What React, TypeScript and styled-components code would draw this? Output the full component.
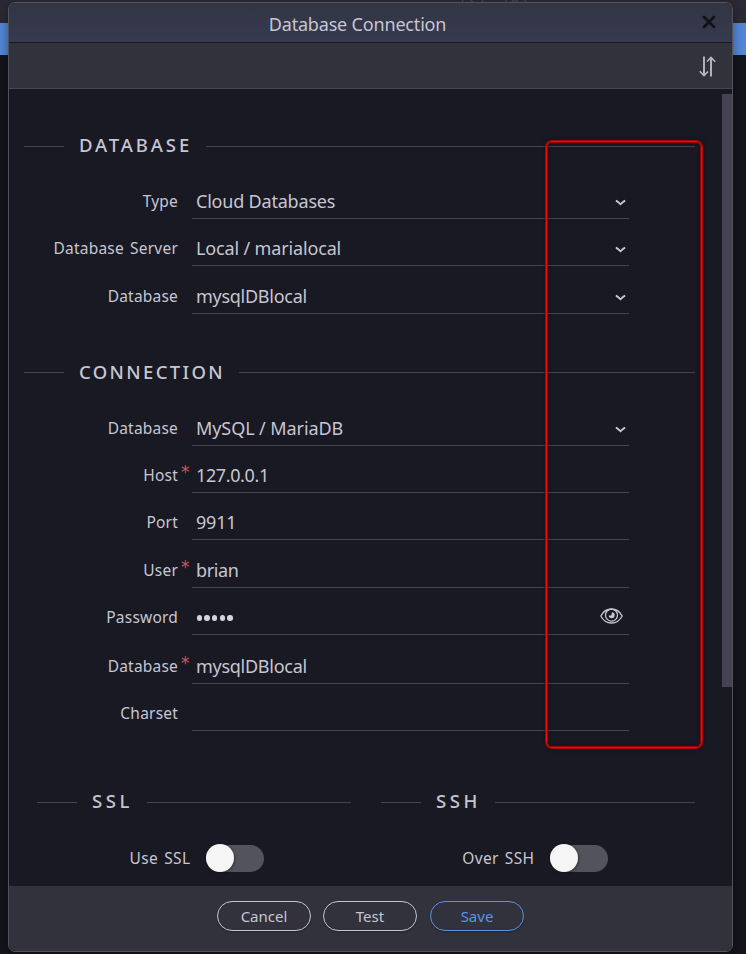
import React from "react";
import styled, { createGlobalStyle } from "styled-components";

const GlobalStyle = createGlobalStyle`
  * { box-sizing: border-box; }
  html, body { margin: 0; padding: 0; background: #14141c; }
  body { font-family: "Noto Sans", "Open Sans", sans-serif; color: #c6c6d2; overflow: hidden; }
`;

const Page = styled.div`
  height: 954px;
  padding: 2px 13px 0 8px;
  background: linear-gradient(
    #2b2a34 0 23px,
    #5386d6 23px 55px,
    #14141c 55px
  );
`;

const Dialog = styled.div`
  height: 950px;
  display: flex;
  flex-direction: column;
  border: 1px solid #53535e;
  border-radius: 7px;
  overflow: hidden;
  background: #191923;
  box-shadow: 0 2px 10px rgba(0, 0, 0, 0.4);
`;

const TitleBar = styled.header`
  height: 40px;
  flex: none;
  display: grid;
  grid-template-columns: 48px 1fr 48px;
  align-items: center;
  border-bottom: 1px solid #191923;
  background: linear-gradient(#333541, #343a50);
`;

const Title = styled.h1`
  grid-column: 2;
  margin: 3px 0 0 -26px;
  text-align: center;
  font-weight: 400;
  font-size: 18px;
  line-height: 24px;
  letter-spacing: -0.18px;
`;

const IconButton = styled.button`
  display: flex;
  padding: 0;
  border: 0;
  background: none;
  color: inherit;
`;

const CloseButton = styled(IconButton)`
  justify-self: end;
  margin: -1px 16px 0 0;
  color: #111115;
`;

const Toolbar = styled.div`
  height: 46px;
  flex: none;
  display: flex;
  align-items: center;
  justify-content: flex-end;
  padding: 2px 16px 0 0;
  border-bottom: 1px solid #474751;
  background: #32323d;
`;

const Body = styled.main`
  flex: 1;
  min-height: 0;
  display: flex;
  justify-content: space-between;
`;

const Content = styled.div`
  width: 686px;
  padding: 42px 0 0 15px;
`;

const ScrollThumb = styled.div`
  width: 10px;
  height: 593px;
  margin-top: 5px;
  background: #44434f;
`;

const Heading = styled.div<{ $top?: number }>`
  height: 31px;
  margin-top: ${(p) => p.$top ?? 0}px;
  display: flex;
  align-items: center;
  &::before, &::after { content: ""; height: 1px; background: #44444f; }
  &::before { width: 40px; }
  &::after { flex: 1; }
`;

const HeadingText = styled.h2<{ $spacing: number; $lift?: number }>`
  margin: -${(p) => p.$lift ?? 3}px 14px 0 15px;
  font-size: 18.5px;
  font-weight: 500;
  line-height: 24px;
  letter-spacing: ${(p) => p.$spacing}px;
`;

const Fields = styled.div<{ $top: number }>`
  width: 605px;
  margin-top: ${(p) => p.$top}px;
`;

const Row = styled.div<{ $height: number }>`
  height: ${(p) => p.$height}px;
  display: grid;
  grid-template-columns: 154px 14px 437px;
  align-items: end;
`;

const Label = styled.label`
  text-align: right;
  font-size: 15.5px;
  line-height: 20px;
  white-space: nowrap;
  letter-spacing: 0.2px;
  word-spacing: 2px;
  margin-bottom: 8px;
`;

const Required = styled.span`
  align-self: end;
  margin: 0 0 11px 3px;
  color: #d65656;
  font-family: "DejaVu Sans", sans-serif;
  font-size: 17px;
  line-height: 20px;
`;

const Field = styled.div`
  height: 36px;
  display: flex;
  align-items: center;
  justify-content: space-between;
  padding: 3px 3px 0 4px;
  border-bottom: 1px solid #44444f;
`;

const Value = styled.span<{ $spacing?: number }>`
  margin-top: -2px;
  font-size: 18px;
  line-height: 24px;
  white-space: nowrap;
  letter-spacing: ${(p) => p.$spacing ?? -0.2}px;
`;

const Dots = styled.span`
  display: flex;
  gap: 2.2px;
  margin: 0 0 0 0.6px;
  i { width: 5.5px; height: 5.5px; border-radius: 50%; background: #d4d4df; }
`;

const Halves = styled.div`
  display: grid;
  grid-template-columns: 314px 314px;
  column-gap: 30px;
  margin: 56px 0 0 13px;
`;

const SwitchRow = styled.div`
  display: grid;
  grid-template-columns: 153.5px 58px;
  column-gap: 15.5px;
  align-items: center;
  margin-top: 26px;
  height: 28px;
`;

const SwitchLabel = styled.label`
  text-align: right;
  font-size: 15.5px;
  line-height: 20px;
  letter-spacing: 0.4px;
  word-spacing: 1.5px;
`;

const Track = styled.div`
  width: 58px;
  height: 27px;
  display: flex;
  align-items: center;
  border-radius: 14px;
  background: #53535e;
`;

const Knob = styled.div`
  flex: none;
  width: 28px;
  height: 28px;
  margin-top: -1px;
  border-radius: 50%;
  background: #f5f5f5;
  box-shadow: 1px 1px 3px rgba(0, 0, 0, 0.35);
`;

const Footer = styled.footer`
  height: 65px;
  flex: none;
  display: flex;
  gap: 12px;
  padding: 15px 0 0 208px;
  background: #32323d;
`;

const Button = styled.button<{ $primary?: boolean }>`
  width: 94px;
  height: 30px;
  padding: 0;
  border: 1px solid ${(p) => (p.$primary ? "#5b92ea" : "#c6c6d2")};
  border-radius: 15px;
  margin-left: ${(p) => (p.$primary ? 1 : 0)}px;
  background: transparent;
  color: ${(p) => (p.$primary ? "#5b92ea" : "#c6c6d2")};
  font: 400 15px/20px "Noto Sans", "Open Sans", sans-serif;
  box-shadow: 0 1px 2px rgba(0, 0, 0, 0.3);
`;

/* Annotation frame lying over the right end of the form */
const Highlight = styled.div`
  position: absolute;
  left: 546px;
  top: 141px;
  width: 156px;
  height: 607px;
  border: 1px solid #ff0000;
  border-radius: 6px;
  box-shadow: 0 0 0 1px rgba(225, 0, 0, 0.75), inset 0 0 0 1px rgba(225, 0, 0, 0.65),
    0 0 5px rgba(0, 0, 0, 0.6), inset 0 0 5px rgba(0, 0, 0, 0.5);
`;

const BackdropMarks = styled.svg`
  position: absolute;
  left: 460px;
  top: 0;
`;

const Chevron = () => (
  <svg width="11" height="7" viewBox="0 0 11 7" fill="none">
    <path d="M0.8 1.7C2.5 2.3 4 3.9 5.5 5.3C7 3.9 8.5 2.3 10.2 1.7" stroke="#c9c9d5" strokeWidth="1.8" />
  </svg>
);

const CloseIcon = () => (
  <svg width="14" height="14" viewBox="0 0 14 14" fill="none">
    <path d="M2 2L12 12M12 2L2 12" stroke="currentColor" strokeWidth="2.8" strokeLinecap="round" />
  </svg>
);

const SortIcon = () => (
  <svg width="17" height="21" viewBox="0 0 17 21" fill="none" stroke="#b8b8c3">
    <path d="M5 0.5V19M12 20.5V2" strokeWidth="1.9" />
    <path d="M0.8 15.3L5 19.5L9 15.5M8 5.5L12 1.5L16.2 5.7" strokeWidth="1.6" />
  </svg>
);

const EyeIcon = () => (
  <svg width="23" height="16" viewBox="0 0 23 16" fill="none" stroke="#c6c6d2">
    <path d="M0.8 8C3.2 3.4 7 1 11.5 1S19.8 3.4 22.2 8C19.8 12.6 16 15 11.5 15S3.2 12.6 0.8 8Z" strokeWidth="1.3" />
    <circle cx="11.5" cy="7.2" r="6" strokeWidth="1.2" />
    <path d="M12 4.2A3 3 0 1 1 8.7 7.4H11.3Z" fill="#c6c6d2" stroke="none" />
  </svg>
);

type FieldRowProps = {
  label: string;
  height?: number;
  value?: string;
  spacing?: number;
  required?: boolean;
  kind?: "select" | "text" | "password";
};

const FieldRow = ({ label, height = 47, value, spacing, required, kind = "text" }: FieldRowProps) => (
  <Row $height={height}>
    <Label>{label}</Label>
    <Required>{required ? "*" : ""}</Required>
    <Field>
      {kind === "password" ? (
        <Dots><i /><i /><i /><i /><i /></Dots>
      ) : (
        <Value $spacing={spacing}>{value}</Value>
      )}
      {kind === "select" && <Chevron />}
      {kind === "password" && <PasswordEye><EyeIcon /></PasswordEye>}
    </Field>
  </Row>
);

const PasswordEye = styled(IconButton)`
  margin: -4px 3px 0 0;
`;

export default function App() {
  return (
    <>
      <GlobalStyle />
      <Page>
        <BackdropMarks width="70" height="3" stroke="#4a4a53" fill="none">
          <path d="M3 0L2 3M10 0L13 2M23 0L22 2M46 0V3M52 3V1H58M64 0L67 2" />
        </BackdropMarks>
        <Dialog>
          <TitleBar>
            <Title>Database Connection</Title>
            <CloseButton aria-label="Close"><CloseIcon /></CloseButton>
          </TitleBar>
          <Toolbar>
            <IconButton aria-label="Sort"><SortIcon /></IconButton>
          </Toolbar>
          <Body>
            <Content>
              <Heading><HeadingText $spacing={2.9}>DATABASE</HeadingText></Heading>
              <Fields $top={10}>
                <FieldRow label="Type" value="Cloud Databases" kind="select" />
                <FieldRow label="Database Server" value="Local / marialocal" kind="select" spacing={-0.15} />
                <FieldRow label="Database" value="mysqlDBlocal" kind="select" height={48} spacing={-0.27} />
              </Fields>
              <Heading $top={43}><HeadingText $spacing={2.35} $lift={1}>CONNECTION</HeadingText></Heading>
              <Fields $top={11}>
                <FieldRow label="Database" value="MySQL / MariaDB" kind="select" spacing={-0.08} />
                <FieldRow label="Host" value="127.0.0.1" required spacing={-0.38} />
                <FieldRow label="Port" value="9911" />
                <FieldRow label="User" value="brian" required height={48} spacing={-0.35} />
                <FieldRow label="Password" kind="password" />
                <FieldRow label="Database" value="mysqlDBlocal" required height={49} spacing={-0.27} />
                <FieldRow label="Charset" />
              </Fields>
              <Halves>
                <div>
                  <Heading><HeadingText $spacing={3.6}>SSL</HeadingText></Heading>
                  <SwitchRow>
                    <SwitchLabel>Use SSL</SwitchLabel>
                    <Track><Knob /></Track>
                  </SwitchRow>
                </div>
                <div>
                  <Heading><HeadingText $spacing={3.6}>SSH</HeadingText></Heading>
                  <SwitchRow>
                    <SwitchLabel>Over SSH</SwitchLabel>
                    <Track><Knob /></Track>
                  </SwitchRow>
                </div>
              </Halves>
            </Content>
            <ScrollThumb />
          </Body>
          <Footer>
            <Button>Cancel</Button>
            <Button>Test</Button>
            <Button $primary>Save</Button>
          </Footer>
        </Dialog>
      </Page>
      <Highlight />
    </>
  );
}
